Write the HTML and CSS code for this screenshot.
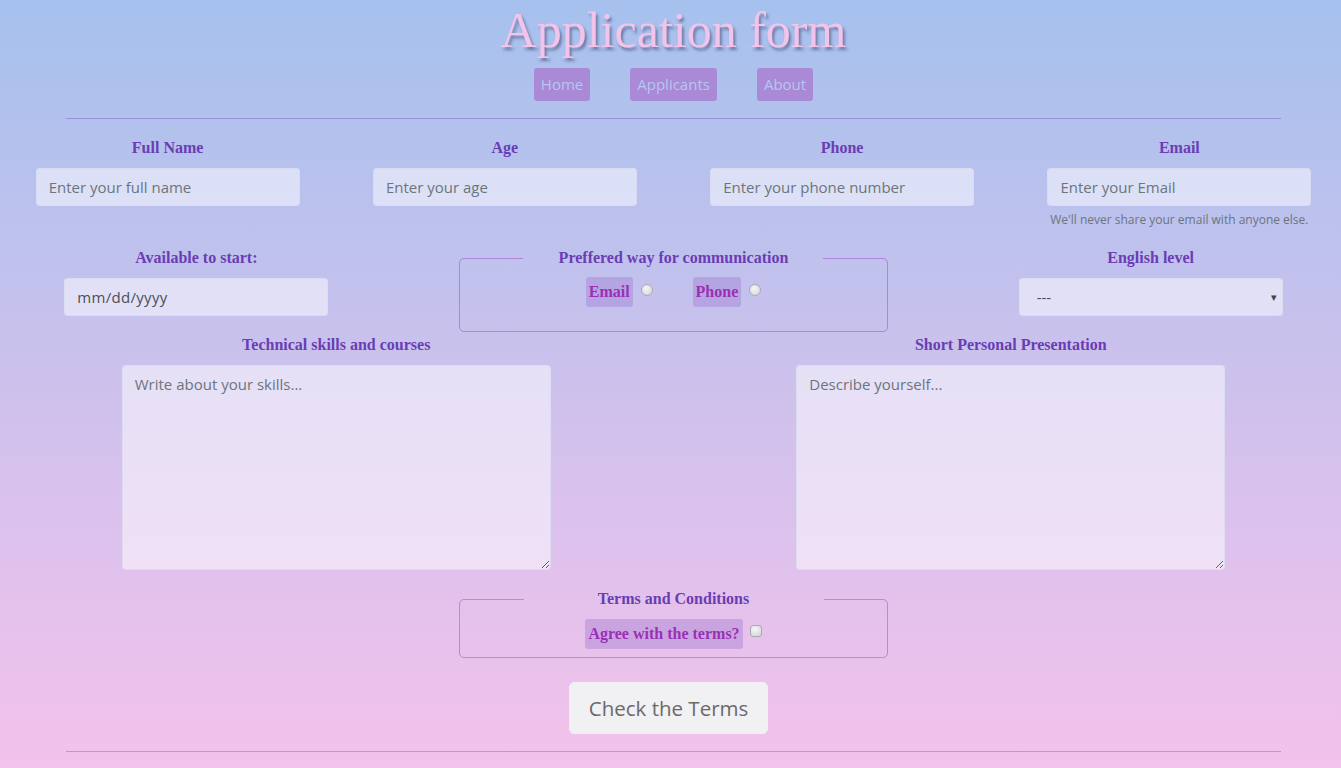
FILE: index.html
```html
<!DOCTYPE html>
<html lang="en">
<head>
<meta charset="utf-8">
<title>Application form</title>
<link rel="stylesheet" href="styles.css">
</head>
<body>
<div class="page">
  <header class="header">
    <h1 class="title">Application form</h1>
    <nav class="nav">
      <a class="nav-link" href="#">Home</a>
      <a class="nav-link" href="#">Applicants</a>
      <a class="nav-link" href="#">About</a>
    </nav>
  </header>
  <hr class="divider">
  <form class="form">
    <div class="row row-first">
      <div class="field">
        <label class="label" for="name">Full Name</label>
        <input class="control" id="name" type="text" placeholder="Enter your full name">
      </div>
      <div class="field">
        <label class="label" for="age">Age</label>
        <input class="control" id="age" type="text" placeholder="Enter your age">
      </div>
      <div class="field">
        <label class="label" for="phone">Phone</label>
        <input class="control" id="phone" type="text" placeholder="Enter your phone number">
      </div>
      <div class="field">
        <label class="label" for="email">Email</label>
        <input class="control" id="email" type="text" placeholder="Enter your Email">
        <small class="hint">We'll never share your email with anyone else.</small>
      </div>
    </div>

    <div class="row row-second">
      <div class="field">
        <label class="label" for="start">Available to start:</label>
        <input class="control control-date" id="start" type="text" placeholder="mm/dd/yyyy">
      </div>
      <fieldset class="group">
        <legend class="legend">Preffered way for communication</legend>
        <div class="options">
          <div class="option">
            <label class="option-label" for="c-email">Email</label>
            <input class="radio" id="c-email" type="radio" name="comm">
          </div>
          <div class="option">
            <label class="option-label" for="c-phone">Phone</label>
            <input class="radio" id="c-phone" type="radio" name="comm">
          </div>
        </div>
      </fieldset>
      <div class="field">
        <label class="label" for="level">English level</label>
        <div class="select-wrap">
          <select class="control control-select" id="level">
            <option>---</option>
          </select>
          <span class="caret">&#9662;</span>
        </div>
      </div>
    </div>

    <div class="row row-third">
      <div class="field field-wide">
        <label class="label" for="skills">Technical skills and courses</label>
        <textarea class="control textarea" id="skills" placeholder="Write about your skills..."></textarea>
      </div>
      <div class="field field-wide">
        <label class="label" for="about">Short Personal Presentation</label>
        <textarea class="control textarea" id="about" placeholder="Describe yourself..."></textarea>
      </div>
    </div>

    <div class="row row-terms">
      <fieldset class="group group-terms">
        <legend class="legend">Terms and Conditions</legend>
        <div class="options options-terms">
          <div class="option option-terms">
            <label class="option-label" for="agree">Agree with the terms?</label>
            <input class="checkbox" id="agree" type="checkbox">
          </div>
        </div>
      </fieldset>
    </div>

    <div class="actions">
      <button class="btn" type="button">Check the Terms</button>
    </div>
  </form>
  <hr class="divider divider-bottom">
</div>
</body>
</html>
```

FILE: styles.css
```css
html {
  overflow: hidden;
}

body {
  margin: 0;
  min-height: 840px;
  background: linear-gradient(to top, #fbc2eb 0%, #a6c1ee 100%);
  font-family: "Open Sans", "Noto Sans", sans-serif;
}

.page {
  width: 1349px;
  margin-left: -1px;
}

.header {
  text-align: center;
}

.title {
  margin: 0;
  padding-top: 2px;
  font: 400 50px/56px "Liberation Serif", "Times New Roman", serif;
  color: #f3c4ea;
  text-shadow: 2px 3px 3px rgba(70, 70, 110, 0.6);
}

.nav {
  display: flex;
  justify-content: center;
  gap: 40px;
  margin-top: 10px;
}

.nav-link {
  display: block;
  padding: 4px 7px;
  line-height: 25px;
  font-size: 15px;
  background: #aa89d7;
  color: #b5c7f2;
  border-radius: 3px;
  text-decoration: none;
}

.divider {
  width: 90%;
  height: 0;
  margin: 17px auto 0;
  border: 0;
  border-top: 1px solid rgba(110, 60, 170, 0.35);
}

.row {
  display: flex;
  justify-content: space-around;
  align-items: flex-start;
}

.row-first {
  margin-top: 17px;
}

.row-second {
  margin-top: 17px;
}

.row-third {
  margin-top: 1px;
}

.row-terms {
  margin-top: 17px;
  justify-content: center;
}

.field {
  width: 264px;
  display: flex;
  flex-direction: column;
  align-items: center;
}

.field-wide {
  width: 429px;
}

.label,
.legend {
  font: 700 16px/24px "Liberation Serif", "Times New Roman", serif;
  color: #6a3db4;
}

.label {
  margin-bottom: 8px;
  padding-top: 1px;
  margin-top: -1px;
}

.control {
  box-sizing: border-box;
  width: 264px;
  height: 38px;
  margin: 0;
  padding: 6px 12px;
  font: 15px/24px "Open Sans", "Noto Sans", sans-serif;
  color: #495057;
  background: rgba(255, 255, 255, 0.5);
  border: 1px solid rgba(215, 218, 238, 0.7);
  border-radius: 4px;
  outline: none;
}

.control::placeholder {
  color: #6c757d;
  opacity: 1;
}

.control-date::placeholder {
  color: #495057;
  letter-spacing: 0.3px;
}

.hint {
  margin-top: 4px;
  font-size: 12px;
  line-height: 19px;
  color: #6c757d;
  white-space: nowrap;
}

.select-wrap {
  position: relative;
  width: 264px;
}

.control-select {
  appearance: none;
  -webkit-appearance: none;
  padding: 6px 17px;
  display: block;
}

.caret {
  position: absolute;
  right: 6px;
  top: 9px;
  font-size: 11px;
  line-height: 20px;
  color: #444;
  pointer-events: none;
}

.textarea {
  width: 429px;
  height: 205px;
  resize: vertical;
  display: block;
}

.group {
  box-sizing: border-box;
  width: 429px;
  min-inline-size: auto;
  margin: 0;
  padding: 0 10px 24px;
  border: 1px solid rgba(150, 60, 200, 0.45);
  border-radius: 5px;
}

.group-terms {
  padding-bottom: 8px;
}

.legend {
  width: 300px;
  margin: 0 auto;
  padding: 0;
  text-align: center;
}

.options {
  display: flex;
  justify-content: center;
  gap: 40px;
  padding-top: 7px;
}

.options-terms {
  padding-top: 8px;
}

.option {
  display: flex;
  align-items: center;
  gap: 8px;
}

.option-terms {
  gap: 7px;
}

.option-label {
  padding: 3px;
  font: 700 16px/24px "Liberation Serif", "Times New Roman", serif;
  color: #9b30b5;
  background: rgba(160, 120, 210, 0.4);
  border-radius: 3px;
}

.radio,
.checkbox {
  appearance: none;
  -webkit-appearance: none;
  box-sizing: border-box;
  width: 12px;
  height: 12px;
  margin: 0 0 4px;
  border: 1px solid #a9a9b4;
  background: radial-gradient(circle at 40% 35%, #f6f6f6 0%, #d2d2d8 100%);
}

.radio {
  border-radius: 50%;
}

.checkbox {
  border-radius: 3px;
  margin-bottom: 6px;
}

.actions {
  margin-top: 24px;
  text-align: center;
}

.btn {
  margin: 0 10px 0 0;
  padding: 10px 19px;
  font: 20.5px/30px "Open Sans", "Noto Sans", sans-serif;
  color: #6a6a6a;
  background: #f1f0f2;
  border: 1px solid #efeef1;
  border-radius: 5px;
}

.divider-bottom {
  margin-top: 17px;
}
```
